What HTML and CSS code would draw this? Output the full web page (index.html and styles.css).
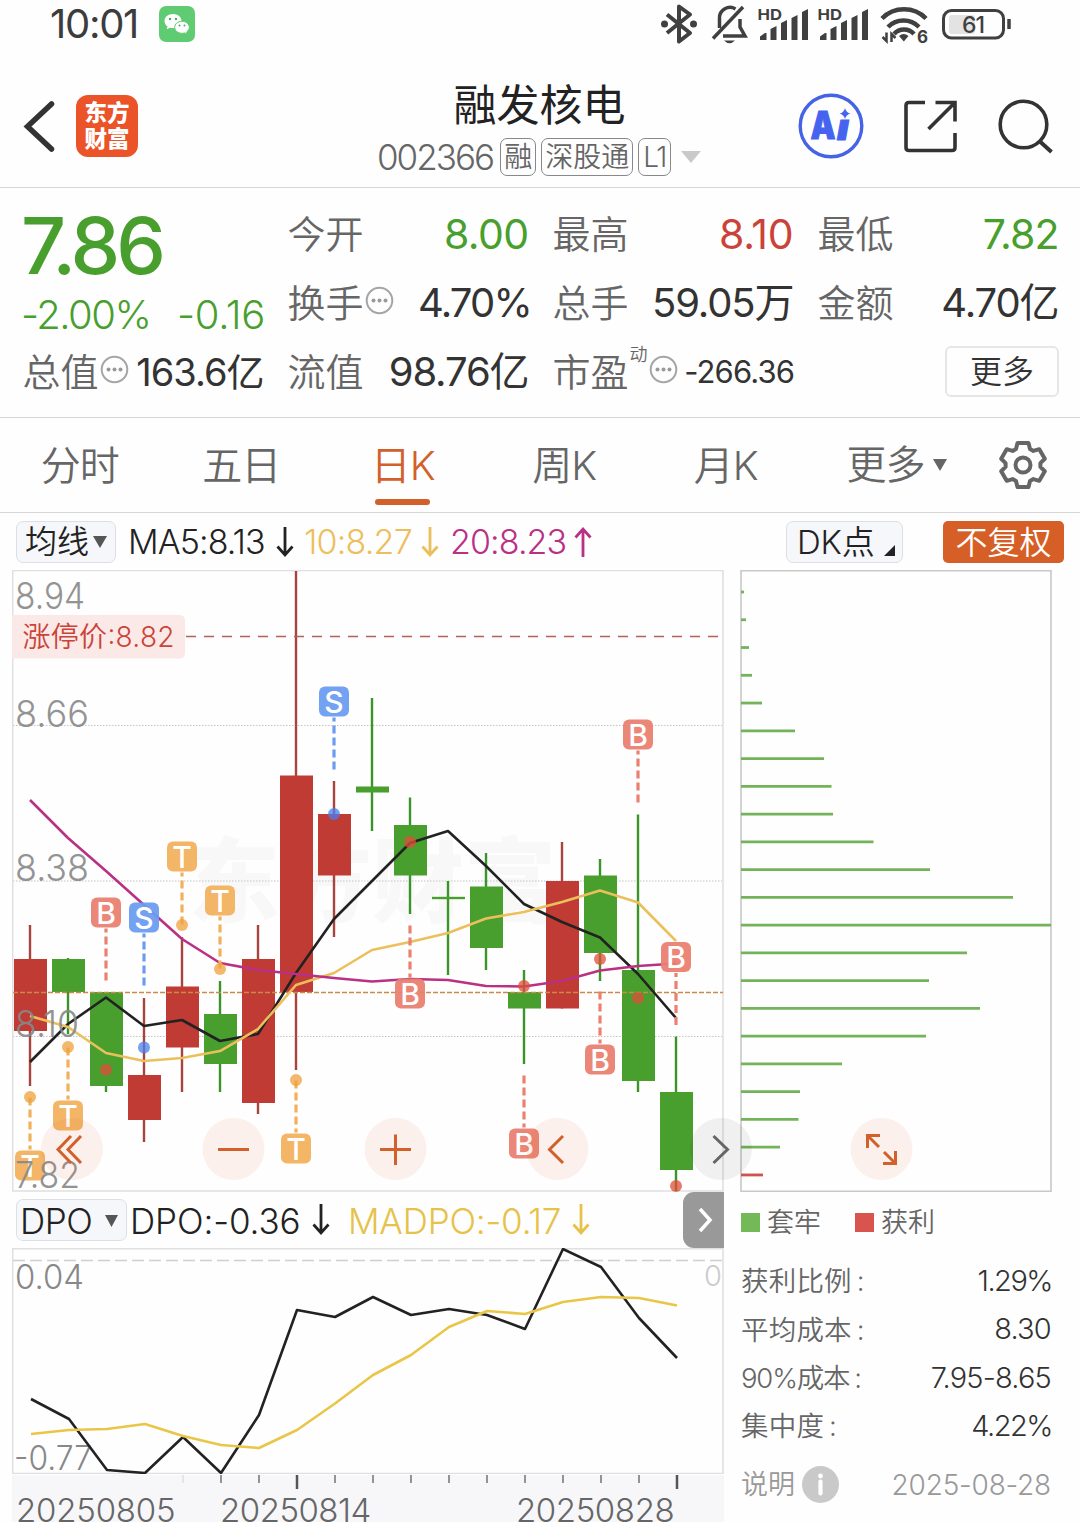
FILE: index.html
```html
<!DOCTYPE html>
<html lang="zh-CN">
<head>
<meta charset="utf-8">
<title>融发核电 002366</title>
<link rel="stylesheet" href="styles.css">
</head>
<body>
<div class="phone">
  <div class="status">
    <span class="clock">10:01</span>
    <svg class="wechat" width="36" height="36" viewBox="0 0 36 36">
      <rect width="36" height="36" rx="7" fill="#5fcb73"/>
      <path d="M14 8c-5 0-8.500 3.200-8.500 7 0 2.300 1.200 4.200 3 5.500l-.7 2.800 3.200-1.600c1 .3 2 .4 3 .4 5 0 8.500-3.200 8.500-7.100S19 8 14 8z" fill="#fff"/>
      <path d="M23 15.300c-4.200 0-7.300 2.700-7.300 6s3.100 6 7.300 6c.9 0 1.800-.1 2.600-.4l2.600 1.400-.6-2.400c1.700-1.100 2.700-2.700 2.700-4.600 0-3.300-3.100-6-7.300-6z" fill="#fff" stroke="#5fcb73" stroke-width="1"/>
      <g fill="#49ad5c"><circle cx="11" cy="13" r="1.200"/><circle cx="17" cy="13" r="1.200"/><circle cx="20.500" cy="19.500" r="1"/><circle cx="25.500" cy="19.500" r="1"/></g>
    </svg>
    <svg class="sys" width="352" height="48" viewBox="660 0 352 48" fill="none" stroke="#404040" stroke-width="4">
      <path d="M667 14.500L690 33 679 41.500V6.500L690 14.500 667 33" stroke-linejoin="round"/>
      <circle cx="664.500" cy="24" r="3.500" fill="#404040" stroke="none"/><circle cx="693.500" cy="24" r="3.500" fill="#404040" stroke="none"/>
      <path d="M719.500 28V18a10.500 10.500 0 0 1 16-9M740 19v8l5 9h-22" stroke-width="3.500"/>
      <path d="M743 7L713 38.500" stroke-width="3.500"/>
      <path d="M724 40.500h11q-5.500 5.500-11 0z" fill="#404040" stroke="none"/>
      <g id="bars" fill="#404040" stroke="none">
        <path d="M760 40v-3.500l5-3.500h1.500v7zM770.500 40V29l6-3v14zM781 40V23l6-3v20zM791.500 40V18l6-3v25zM802 40V12l6-3v31z"/>
        <path d="M820 40v-3.500l5-3.500h1.500v7zM830.500 40V29l6-3v14zM841 40V23l6-3v20zM851.500 40V18l6-3v25zM862 40V12l6-3v31z"/>
      </g>
      <g class="hd"><text x="757.500" y="19.700" textLength="24.500" lengthAdjust="spacingAndGlyphs">HD</text><text x="817.500" y="19.700" textLength="24.500" lengthAdjust="spacingAndGlyphs">HD</text><text x="917" y="42.500" font-size="17">6</text></g>
      <g stroke-width="4.500"><path d="M882 18.500a31 31 0 0 1 44 0M888 27a22 22 0 0 1 31 0M894 34a13.500 13.500 0 0 1 20 0"/></g>
      <path d="M899 36q4.500-4 9.500 0l-4.700 5.500z" fill="#404040" stroke="none"/>
      <path d="M886.500 32.500V41l-4-4M891.500 42V34l4 4" stroke-width="2.500"/>
      <rect x="949" y="15" width="26" height="19" rx="3" fill="#e3e3e3" stroke="none"/>
      <rect x="943.500" y="10.500" width="60" height="27.500" rx="8" stroke-width="3"/>
      <path d="M1009 19v10" stroke-width="3.500"/>
      <text class="batt" x="973" y="33" text-anchor="middle">61</text>
    </svg>
  </div>

  <header class="head">
    <svg class="back" width="34" height="60" viewBox="22 97 34 60" fill="none" stroke="#333" stroke-width="5.500"><path d="M51.500 104L27.500 126.500 51.500 149" stroke-linecap="round"/></svg>
    <div class="logo"><span>东方</span><span>财富</span></div>
    <div class="title">
      <h1>融发核电</h1>
      <div class="code"><span class="num">002366</span><i class="tag">融</i><i class="tag">深股通</i><i class="tag l1">L1</i><svg width="20" height="12" viewBox="0 0 20 12"><path d="M0 0h20L10 12z" fill="#c9c9c9"/></svg></div>
    </div>
    <svg class="acts" width="258" height="66" viewBox="798 93 258 66" fill="none" stroke="#333" stroke-width="3.600">
      <circle cx="831" cy="126" r="30.800" stroke="#4663e6" stroke-width="3.400"/>
      <g class="ai"><text x="810.500" y="139" textLength="25" lengthAdjust="spacingAndGlyphs">A</text><text class="i" x="837" y="139.500" textLength="12" lengthAdjust="spacingAndGlyphs">ı</text></g>
      <path d="M845 108q1.200 4.800 5.500 5.500-4.300 1.200-5.500 5.500-1.200-4.300-5.500-5.500 4.300-.7 5.500-5.500z" fill="#4663f0" stroke="none"/>
      <path d="M925 102.500h-16q-3 0-3 3v42q0 3 3 3h43q3 0 3-3V133M935.500 102.500H955V121.500M954 103.500L928.500 129"/>
      <circle cx="1023.500" cy="124.500" r="23.300"/><path d="M1040.500 142l11 10" stroke-width="4"/>
    </svg>
  </header>

  <section class="quote">
    <div class="last">
      <b>7.86</b>
      <div class="chg"><span>-2.00%</span><span class="d">-0.16</span></div>
    </div>
    <div class="cell"><span>今开</span><em class="dn o">8.00</em></div>
    <div class="cell"><span>最高</span><em class="up">8.10</em></div>
    <div class="cell"><span>最低</span><em class="dn">7.82</em></div>
    <div class="cell"><span>换手</span><svg class="dots" width="29" height="29" viewBox="0 0 29 29"><circle cx="14.500" cy="14.500" r="12.800" fill="none" stroke="#a5a5a5" stroke-width="2"/><g fill="#999"><circle cx="8.500" cy="14.500" r="2"/><circle cx="14.500" cy="14.500" r="2"/><circle cx="20.500" cy="14.500" r="2"/></g></svg><em class="t">4.70%</em></div>
    <div class="cell"><span>总手</span><em>59.05万</em></div>
    <div class="cell"><span>金额</span><em>4.70亿</em></div>
    <div class="cell"><span>总值</span><svg class="dots" width="29" height="29" viewBox="0 0 29 29"><circle cx="14.500" cy="14.500" r="12.800" fill="none" stroke="#a5a5a5" stroke-width="2"/><g fill="#999"><circle cx="8.500" cy="14.500" r="2"/><circle cx="14.500" cy="14.500" r="2"/><circle cx="20.500" cy="14.500" r="2"/></g></svg><em class="cap">163.6亿</em></div>
    <div class="cell"><span>流值</span><em>98.76亿</em></div>
    <div class="cell"><span>市盈</span><sup>动</sup><svg class="dots pe" width="29" height="29" viewBox="0 0 29 29"><circle cx="14.500" cy="14.500" r="12.800" fill="none" stroke="#a5a5a5" stroke-width="2"/><g fill="#999"><circle cx="8.500" cy="14.500" r="2"/><circle cx="14.500" cy="14.500" r="2"/><circle cx="20.500" cy="14.500" r="2"/></g></svg><em class="s">-266.36</em></div>
    <div class="cell end"><button class="more">更多</button></div>
  </section>

  <nav class="tabs">
    <a>分时</a><a>五日</a><a class="on">日K</a><a>周K</a><a>月K</a>
    <a class="drop">更多<svg width="14" height="12" viewBox="0 0 14 12"><path d="M0 0h14L7 12z" fill="#666"/></svg></a>
    <svg class="gear" width="50" height="50" viewBox="-25 -25 50 50" fill="none" stroke="#666" stroke-width="4" stroke-linejoin="round"><path d="M-7-16L-5.500-22H5.500L7-16 10.400-14.100 16.300-15.800 21.800-6.200 17.400-1.900V1.900L21.800 6.200 16.300 15.800 10.400 14.100 7 16 5.500 22H-5.500L-7 16-10.400 14.100-16.300 15.800-21.800 6.200-17.400 1.900V-1.900L-21.800-6.200-16.300-15.800-10.400-14.100z"/><circle r="7.500"/></svg>
  </nav>

  <div class="ma">
    <button class="chip avg">均线<svg width="14" height="12" viewBox="0 0 14 12"><path d="M0 0h14L7 12z" fill="#555"/></svg></button>
    <span class="m5">MA5:8.13</span><svg class="ar" width="18" height="32" viewBox="0 0 18 32"><path d="M9 1v28M1.500 20.500L9 29l7.500-8.500"/></svg>
    <span class="m10">10:8.27</span><svg class="ar y" width="18" height="32" viewBox="0 0 18 32"><path d="M9 1v28M1.500 20.500L9 29l7.500-8.500"/></svg>
    <span class="m20">20:8.23</span><svg class="ar p" width="18" height="32" viewBox="0 0 18 32"><path d="M9 31V3M1.500 11.500L9 3l7.500 8.500"/></svg>
    <button class="chip dk">DK点<svg width="11" height="11" viewBox="0 0 11 11"><path d="M11 0v11H0z" fill="#222"/></svg></button>
    <button class="adj">不复权</button>
  </div>

  <main class="main">
    <div class="left">
      <svg id="k" width="712" height="622" viewBox="12 570 712 622"></svg>
      <div class="dporow">
        <button class="chip dpo">DPO<svg width="13" height="12" viewBox="0 0 13 12"><path d="M0 0h13L6.500 12z" fill="#555"/></svg></button>
        <span class="v1">DPO:-0.36</span><svg class="ar" width="18" height="32" viewBox="0 0 18 32"><path d="M9 0v29M1.500 20.500L9 29l7.500-8.500"/></svg>
        <span class="v2">MADPO:-0.17</span><svg class="ar g" width="18" height="32" viewBox="0 0 18 32"><path d="M9 0v29M1.500 20.500L9 29l7.500-8.500"/></svg>
        <button class="nextind"><svg width="16" height="26" viewBox="0 0 16 26" fill="none" stroke="#fff" stroke-width="3.500"><path d="M2 2l10 11L2 24"/></svg></button>
      </div>
      <svg id="d" width="712" height="226" viewBox="12 1248 712 226"></svg>
      <div class="axis">
        <svg id="t" width="712" height="15" viewBox="12 1475 712 15"></svg>
        <div class="dates"><span>20250805</span><span>20250814</span><span>20250828</span></div>
      </div>
      <svg class="ctl" width="902" height="62" viewBox="41 1118 902 62" fill="none" stroke="#d2602a" stroke-width="3"></svg>
    </div>
    <aside class="right">
      <svg id="c" width="312" height="622" viewBox="740 570 312 622"></svg>
      <div class="key"><i class="g"></i><span>套牢</span><i class="r"></i><span>获利</span></div>
      <dl>
        <div><dt>获利比例<s>:</s></dt><dd class="pc">1.29%</dd></div>
        <div><dt>平均成本<s>:</s></dt><dd>8.30</dd></div>
        <div><dt class="n">90%成本<s>:</s></dt><dd>7.95-8.65</dd></div>
        <div><dt>集中度<s>:</s></dt><dd class="pc">4.22%</dd></div>
      </dl>
      <div class="note"><span>说明</span><svg width="37" height="37" viewBox="0 0 37 37"><circle cx="18.500" cy="18.500" r="18.500" fill="#c9c9c9"/><circle cx="18.500" cy="10" r="2.400" fill="#fff"/><path d="M18.500 15.500v12" stroke="#fff" stroke-width="4.200" stroke-linecap="round"/></svg><time>2025-08-28</time></div>
    </aside>
  </main>
</div>
<script src="chart.js"></script>
</body>
</html>
```

FILE: styles.css
```css
* { box-sizing: border-box; margin: 0; padding: 0; }
body { font-family: Inter, "Noto Sans CJK SC", sans-serif; font-weight: 360; line-height: 1.2; background: #fff; color: #333; }
button { font: inherit; color: inherit; border: 0; background: none; white-space: nowrap; }
svg { display: block; flex: none; }
i, em, s { font-style: normal; text-decoration: none; }
.phone { width: 1080px; height: 1522px; overflow: hidden; background: #fefefe; }

.status { display: flex; align-items: center; height: 48px; padding: 0 68px 0 50px; }
.clock { font-size: 40px; font-weight: 440; letter-spacing: -1.300px; width: 109px; color: #3c3c3c; white-space: nowrap; }
.sys { margin-left: auto; }
.hd text { fill: #404040; stroke: none; font-size: 15px; font-weight: 700; }
.hd text[font-size] { font-size: 17px; }
.batt { fill: #404040; stroke: none; font-size: 23px; font-weight: 500; letter-spacing: -1px; }

.head { display: flex; align-items: flex-start; height: 140px; border-bottom: 1px solid #d6d6d6; padding: 0 24px 0 22px; }
.back { margin-top: 49px; }
.logo { width: 62px; height: 62px; margin: 47px 0 0 20px; border-radius: 12px; background: #eb5328; color: #fff; font-size: 22.500px; font-weight: 900; line-height: 26px; display: flex; flex-direction: column; align-items: center; justify-content: center; }
.title { width: 324px; margin-left: 239px; }
h1 { font-size: 43px; font-weight: 400; color: #222; line-height: 60px; margin-top: 27px; padding-left: 1px; text-align: center; }
.code { display: flex; align-items: center; height: 40px; margin-top: 2px; color: #666; gap: 5px; }
.code .num { width: 119px; font-size: 35px; letter-spacing: -2px; }
.tag { height: 38px; border: 1.500px solid #888; border-radius: 7px; font-size: 28px; line-height: 37px; padding: 0 3px; white-space: nowrap; }
.tag.l1 { letter-spacing: -1.500px; padding: 0 2px 0 4px; width: 33px; }
.code svg { margin-left: 5px; }
.acts { margin-left: auto; margin-top: 45px; }
.ai text { fill: #4663f0; stroke: #4663f0; stroke-width: 1; font-size: 38px; font-weight: 900; }
.ai .i { font-style: italic; font-size: 36px; }

.quote { display: grid; grid-template-columns: repeat(4, 241px); column-gap: 24px; grid-auto-rows: 69px; padding: 12px 22px 10px 23px; height: 230px; border-bottom: 1px solid #d6d6d6; }
.last { grid-row: span 2; color: #489f2e; }
.last b { display: block; font-size: 79px; font-weight: 540; letter-spacing: -3.900px; line-height: 90px; margin-left: -2px; }
.chg { display: flex; justify-content: space-between; font-size: 40px; line-height: 50px; letter-spacing: -1.500px; margin: 0 -1px 0 -2px; }
.chg .d { letter-spacing: -.3px; }
.cell { display: flex; align-items: center; justify-content: space-between; font-size: 38px; color: #666; position: relative; white-space: nowrap; line-height: 48px; }
.cell > span:first-child { margin: -2px 0 0 -.5px; }
.cell em { margin-left: auto; font-size: 40px; letter-spacing: -1.100px; color: #333; font-weight: 370; margin-right: .5px; margin-top: -1px; }
.cell em.dn { color: #489f2e; font-size: 41px; letter-spacing: -.9px; }
.cell em.o { letter-spacing: -.6px; }
.cell em.up { color: #cb4239; font-size: 41px; letter-spacing: -.2px; }
.cell em.t { letter-spacing: -1.800px; margin-right: -2px; }
.cell em.cap { font-size: 38px; letter-spacing: -1px; }
.cell em.s { font-size: 31px; letter-spacing: -.9px; margin-right: 0; }
.cell .dots { margin: -6px 0 0 1px; }
.cell sup { font-size: 18px; line-height: 20px; margin: -36px 0 0 1px; }
.cell .pe { margin-left: 1px; }
.cell.end { justify-content: flex-end; }
.more { width: 114px; height: 51px; border: 2px solid #e6e6e6; border-radius: 6px; font-size: 32px; color: #333; margin: -3px 0 0 0; line-height: 48px; }

.tabs { display: grid; grid-template-columns: repeat(5, 161.500px) 180px 50px; align-items: center; height: 95px; border-bottom: 1px solid #d6d6d6; font-size: 40px; color: #666; }
.tabs a { text-align: center; line-height: 96px; height: 94px; position: relative; letter-spacing: -1px; white-space: nowrap; right: 1px; }
.tabs .on { color: #d2602a; }
.tabs .on::after { content: ""; position: absolute; left: 53px; bottom: 7px; width: 55px; height: 6px; border-radius: 3px; background: #d2602a; }
.tabs .drop { display: flex; align-items: center; justify-content: center; gap: 8px; }
.gear { margin-left: 10px; }

.ma { display: flex; align-items: center; height: 57px; padding: 0 16px; font-size: 34px; color: #222; white-space: nowrap; }
.chip { display: flex; align-items: center; border: 1.500px solid #dcdfe4; border-radius: 7px; background: #f6f7fa; color: #222; line-height: 40px; }
.avg { width: 100px; height: 42px; font-size: 32px; padding: 0 0 0 8px; gap: 4px; margin-right: 12px; }
.ma span { letter-spacing: -.9px; line-height: 56px; padding-top: 1px; }
.ma .m5 { width: 148px; }
.ma .m10 { width: 117px; margin-left: 10px; color: #ecbf5c; letter-spacing: -.8px; }
.ma .m20 { width: 124px; margin-left: 11px; color: #b93085; }
.ar { fill: none; stroke: #222; stroke-width: 2.800; }
.ar.y { stroke: #ecbf5c; }
.ar.p { stroke: #b93085; }
.ar.g { stroke: #e6c249; }
.dk { width: 117px; height: 42px; font-size: 33px; letter-spacing: -.2px; padding-left: 10px; margin-left: auto; gap: 9px; }
.dk svg { align-self: flex-end; margin-bottom: 6px; }
.adj { width: 121px; height: 42px; border-radius: 5px; background: #d65f27; color: #fff; font-size: 32px; line-height: 43px; margin-left: 40px; }

.main { display: flex; }
.left { width: 712px; margin-left: 12px; position: relative; }
.right { width: 312px; margin-left: 16px; }
#k text, #d text { font-family: Inter, "Noto Sans CJK SC", sans-serif; }
.wm { font-size: 92px; font-weight: 900; fill: #f8f8f8; }
.lab { fill: #888; }
#k .mk { fill: #fff; font-size: 30px; font-weight: 550; text-anchor: middle; }
.ctl { position: absolute; left: 29px; top: 548px; }

.dporow { display: flex; align-items: center; height: 56px; padding-left: 4px; font-size: 35px; color: #222; white-space: nowrap; }
.dporow > span { padding-top: 2px; }
.dpo { width: 111px; height: 42px; padding: 2px 0 0 3px; gap: 13px; letter-spacing: -.5px; margin-right: 3px; }
.v1 { width: 182px; letter-spacing: -.1px; }
.v2 { width: 224px; margin-left: 18px; color: #e6c249; letter-spacing: -.2px; }
.nextind { width: 41px; height: 56px; margin-left: auto; border-radius: 11px 0 0 11px; background: #999; display: flex; align-items: center; justify-content: center; padding-left: 4px; }

.axis { height: 48px; background: #f7f7fa; }
.axis svg { margin-top: 1px; }
.dates { display: flex; font-size: 33px; line-height: 41px; color: #666; letter-spacing: -.2px; height: 32px; }
.dates span { width: 204px; margin-left: 4px; white-space: nowrap; }
.dates span:nth-child(2) { width: 293px; margin-left: 0; letter-spacing: -.5px; }
.dates span:nth-child(3) { margin-left: 3px; letter-spacing: -.4px; }

.key { display: flex; align-items: center; height: 60px; font-size: 27px; color: #666; padding-left: 1px; }
.key span { padding-top: 2px; }
.key i { width: 19px; height: 19px; background: #74b957; margin-right: 7px; }
.key .r { background: #d9534f; margin-left: 34px; }
dl { height: 194px; margin-top: 5px; }
dl div { display: flex; align-items: center; justify-content: space-between; height: 48.400px; font-size: 28px; padding: 0 0 0 1px; }
dt { color: #666; font-size: 27.500px; letter-spacing: .2px; padding-top: 1px; }
dt.n { letter-spacing: -1.200px; }
dt s { margin-left: 5px; }
dd { font-size: 29px; letter-spacing: -.8px; margin-right: 1px; }
dd.pc { letter-spacing: -1.500px; margin-right: 0; }
.note { display: flex; align-items: center; height: 60px; margin-top: 3px; font-size: 27px; color: #999; padding-left: 1px; }
.note span, time { padding-top: 3px; }
.note svg { margin-left: 7px; }
time { margin-left: auto; font-size: 28px; letter-spacing: -.2px; margin-right: 1px; }
```

FILE: chart.js
```js
// Daily candles: colour, wick top, body top, body bottom, wick bottom
const RED = '#c03b34', GREEN = '#489f2e';
const candles = [
  ['r', 925, 959, 1031, 1086], ['g', 958, 959, 992, 1034], ['g', 992, 992, 1086, 1092],
  ['r', 998, 1075, 1120, 1142], ['r', 937, 986.5, 1047.5, 1092], ['g', 981, 1014, 1064, 1092],
  ['r', 925, 959, 1103, 1114], ['r', 571, 775.5, 992, 1070], ['r', 781, 814, 875.5, 937],
  ['g', 698, 786.5, 792.5, 831], ['g', 797.5, 825, 875.5, 914], ['g', 881, 896.8, 899.2, 975],
  ['g', 853, 886.5, 948, 970], ['g', 970, 992, 1008.5, 1064], ['r', 842, 881, 1008.5, 1008.5],
  ['g', 859, 875.5, 953, 981], ['g', 814.5, 970, 1081, 1092], ['g', 1036.5, 1092, 1170, 1191]
];
const X = i => 30 + 38 * i;
const line = (ys, color, dx = 0, w = 2.6) =>
  `<polyline fill="none" stroke="${color}" stroke-width="${w}" stroke-linejoin="round" points="${ys.map((y, i) => (X(i) + dx) + ',' + y).join(' ')}"/>`;
const hline = (y, x1, x2, color, dash, w) =>
  `<path d="M${x1} ${y}H${x2}" stroke="${color}" stroke-width="${w}" stroke-dasharray="${dash}"/>`;

// Trade markers: letter, x, badge centre y, signal dot y
const marks = [
  ['S', 334, 701.5, 814], ['B', 106, 912.5, 1069.7], ['S', 144, 917.5, 1047.5], ['T', 182, 856.5, 925],
  ['T', 220, 900.5, 969], ['T', 68, 1115.5, 1047], ['T', 30, 1165.5, 1097], ['T', 296, 1148.5, 1080],
  ['B', 410, 993.5, 842], ['B', 524, 1143.5, 986], ['B', 600, 1059.5, 959], ['B', 638, 734.5, 998], ['B', 676, 957, 1186]
];
const tint = { S: '#6b9cf2', B: '#ea8070', T: '#f2b05c' };
const dotTint = { S: '#4a7fec', B: '#e04e38', T: '#f0a03c' };

let s = '<text class="wm" x="188" y="915" textLength="368">东方财富</text>';
for (const y of [725.5, 881, 1036.5]) s += hline(y, 13, 722, '#c4c4c4', '1.5 1.5', 1.2);
s += '<path d="M12 570.5H723V1191H12.700V570" fill="none" stroke="#e0e0e0" stroke-width="1.600"/>';
candles.forEach(([c, a, b, d, e], i) => {
  const x = X(i), f = c === 'r' ? RED : GREEN;
  s += `<path d="M${x} ${a}V${e}" stroke="${c === 'r' ? '#a8443e' : '#3a9428'}" stroke-width="2.4"/>` +
       `<rect x="${x - 16}" y="${b}" width="33" height="${d - b}" fill="${f}"/>`;
});
s += hline(992.5, 13, 723, '#c98a4a', '5 2', 1.6);
s += hline(636.5, 186, 718, '#b5605a', '10 8', 1.5);
s += line([1062, 1024, 997.5, 1026, 1020, 1041, 1034, 973, 919, 881, 843, 831, 866, 904, 922, 937.5, 974, 1018], '#222');
s += line([1016, 1027, 1053, 1061, 1058, 1051, 1029, 985, 973, 950, 942, 933, 918.5, 912, 902, 890.5, 902.5, 941], '#ebc05c');
s += line([800, 838, 871, 905, 939, 963, 970, 974, 978, 981.5, 979, 980, 986, 986.5, 981, 970.5, 966, 963.5], '#b93085');
for (const [l, x, y, dot] of marks) {
  const down = y < dot && l + x !== 'B410';
  const [y1, y2] = down ? [y + 16, y + 68] : [y - 16, y - 68];
  s += `<path d="M${x} ${y1}V${y2}" stroke="${tint[l]}" stroke-width="3.2" stroke-dasharray="8 4" stroke-dashoffset="4"/>`;
  s += `<circle cx="${x}" cy="${dot}" r="6" fill="${dotTint[l]}" opacity=".75"/>`;
  s += `<rect x="${x - 15}" y="${y - 15}" width="30" height="30" rx="6" fill="${tint[l]}" opacity=".94"/>`;
  s += `<text class="mk" x="${x}" y="${y + 11}">${l}</text>`;
}
s += '<path d="M12 615H179q6 0 6 6V652.500q0 6-6 6H12z" fill="#fae9e6"/><text x="22.500" y="646.500" font-size="28" fill="#cb4239" textLength="152">涨停价:8.82</text>';
for (const [t, y, w] of [['8.94', 609, 70], ['8.66', 726.5, 74], ['8.38', 881, 74], ['8.10', 1036.5, 64], ['7.82', 1187.5, 65]])
  s += `<text class="lab" x="15" y="${y}" font-size="37" textLength="${w}" lengthAdjust="spacingAndGlyphs" opacity=".9">${t}</text>`;
document.getElementById('k').innerHTML = s;

// DPO indicator
s = '<path d="M12 1248.800H723V1473.500H12.700V1248" fill="none" stroke="#e0e0e0" stroke-width="1.600"/>';
s += hline(1260.5, 13, 722, '#cfcfcf', '12 5', 1.3);
s += '<text class="lab" x="15" y="1289" font-size="34" textLength="69" lengthAdjust="spacingAndGlyphs">0.04</text><text class="lab" x="14" y="1470" font-size="34" textLength="78" lengthAdjust="spacingAndGlyphs">-0.77</text><text x="704" y="1286" font-size="29" fill="#ccc" textLength="18" lengthAdjust="spacingAndGlyphs">0</text>';
s += line([1399, 1419, 1470, 1473, 1437, 1473, 1415, 1310, 1317, 1297, 1315, 1309, 1315, 1329, 1249, 1267, 1318, 1358], '#222', 1);
s += line([1434, 1430, 1429, 1424, 1436, 1445, 1448, 1430, 1403.5, 1375, 1355, 1327, 1311, 1314, 1302, 1297, 1298, 1305.5], '#e9c648', 1);
document.getElementById('d').innerHTML = s;

s = '';
for (let i = 4; i < 18; i++) {
  const big = i === 7 || i === 17;
  s += `<path d="M${X(i) + 1} 1475v${big ? 14 : 8}" stroke="${i === 4 ? '#e3e3e3' : big ? '#555' : '#888'}" stroke-width="${big ? 2.5 : 1.8}"/>`;
}
document.getElementById('t').innerHTML = s;

// Cost distribution: right end of each bar
const ends = [744, 746, 749, 752, 762, 795, 824, 831.5, 833, 873.5, 930, 1013, 1051, 967, 929, 980, 926, 842, 800, 798.5, 780, 763];
s = '<path d="M741 570.800H1051V1191.200H741z" fill="none" stroke="#c8c8c8" stroke-width="1.600"/>';
ends.forEach((e, i) => {
  s += `<path d="M741 ${592 + 27.76 * i}H${e}" stroke="${i === 21 ? '#d0534d' : '#74b35a'}" stroke-width="2.8"/>`;
});
document.getElementById('c').innerHTML = s;

// Round chart controls
const disc = (x, c) => `<circle cx="${x}" cy="1149" r="31" fill="${c}" stroke="none"/>`;
const warm = 'rgba(226,100,40,.09)';
document.querySelector('.ctl').innerHTML =
  disc(72, warm) + disc(233.5, warm) + disc(395.5, warm) + disc(557.5, warm) + disc(721, 'rgba(0,0,0,.055)') + disc(881.5, warm) +
  '<path d="M71 1136L58 1149.500 71 1163M81 1136L68 1149.500 81 1163M218 1149.500H249M380 1149.500H411M395.500 1134.500V1165M563 1136L549.500 1149.500 563 1163"/>' +
  '<path d="M713.500 1136L727.500 1149.500 713.500 1163" stroke="#666"/>' +
  '<path d="M880 1135.500H867.500V1148M867.500 1135.500L879 1147M883 1163.500H895.500V1151M895.500 1163.500L884 1152"/>';
```
